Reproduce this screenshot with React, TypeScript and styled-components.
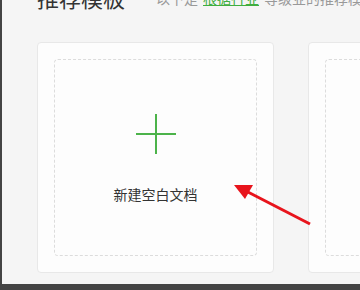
import React from "react";
import styled, { createGlobalStyle } from "styled-components";

const Global = createGlobalStyle`
  html, body { margin: 0; padding: 0; background: #444; }
  body { font-family: "Noto Sans CJK SC", "Noto Sans", sans-serif; }
`;

const Page = styled.div`
  width: 360px;
  height: 290px;
  background: #444;
  overflow: hidden;
  display: flex;
  flex-direction: column;
`;

const Panel = styled.div`
  position: relative;
  margin-left: 2px;
  height: 284px;
  background: #f5f5f5;
  overflow: hidden;
  padding-left: 35px;
  box-sizing: border-box;
`;

const Header = styled.div`
  display: flex;
  align-items: baseline;
  margin-top: -14px;
  height: 22px;
  white-space: nowrap;
`;

const Title = styled.h2`
  margin: 0;
  font-size: 22px;
  line-height: 22px;
  font-weight: 400;
  color: #333;
`;

const Sub = styled.span`
  margin-left: 31px;
  font-size: 14px;
  color: #999;
  position: relative;
  top: -3px;
`;

const Link = styled.a`
  color: #3fae3f;
  text-decoration: underline;
  margin: 0 5px;
`;

const Cards = styled.div`
  display: flex;
  gap: 34px;
  margin-top: 34px;
`;

const Card = styled.div`
  flex: 0 0 237px;
  height: 231px;
  box-sizing: border-box;
  background: #fdfdfd;
  border: 1px solid #e8e8e8;
  border-radius: 4px;
  padding: 16px;
`;

const Dashed = styled.div`
  height: 100%;
  box-sizing: border-box;
  border: 1px dashed #dcdcdc;
  border-radius: 4px;
  display: flex;
  flex-direction: column;
  align-items: center;
  padding-top: 54px;
`;

const Plus = styled.div`
  width: 40px;
  height: 40px;
  position: relative;
  &::before, &::after {
    content: "";
    position: absolute;
    background: #4cb34a;
  }
  &::before { left: 19px; top: 0; width: 2px; height: 40px; }
  &::after { top: 19px; left: 0; height: 2px; width: 40px; }
`;

const Label = styled.div`
  margin-top: 30px;
  font-size: 14px;
  line-height: 20px;
  color: #333;
`;

const Arrow = styled.svg`
  position: absolute;
  left: 0;
  top: 0;
  pointer-events: none;
`;

export default function App() {
  return (
    <>
      <Global />
      <Page>
        <Panel>
          <Header>
            <Title>推荐模板</Title>
            <Sub>
              以下是<Link>根据行业</Link>等级业的推荐模板
            </Sub>
          </Header>
          <Cards>
            <Card>
              <Dashed>
                <Plus />
                <Label>新建空白文档</Label>
              </Dashed>
            </Card>
            <Card>
              <Dashed />
            </Card>
          </Cards>
          <Arrow width="358" height="284" viewBox="2 0 358 284">
            <line x1="310" y1="224" x2="244" y2="190" stroke="#e8141c" strokeWidth="3" />
            <polygon points="234,185 253,185 245,199" fill="#e8141c" />
          </Arrow>
        </Panel>
      </Page>
    </>
  );
}
